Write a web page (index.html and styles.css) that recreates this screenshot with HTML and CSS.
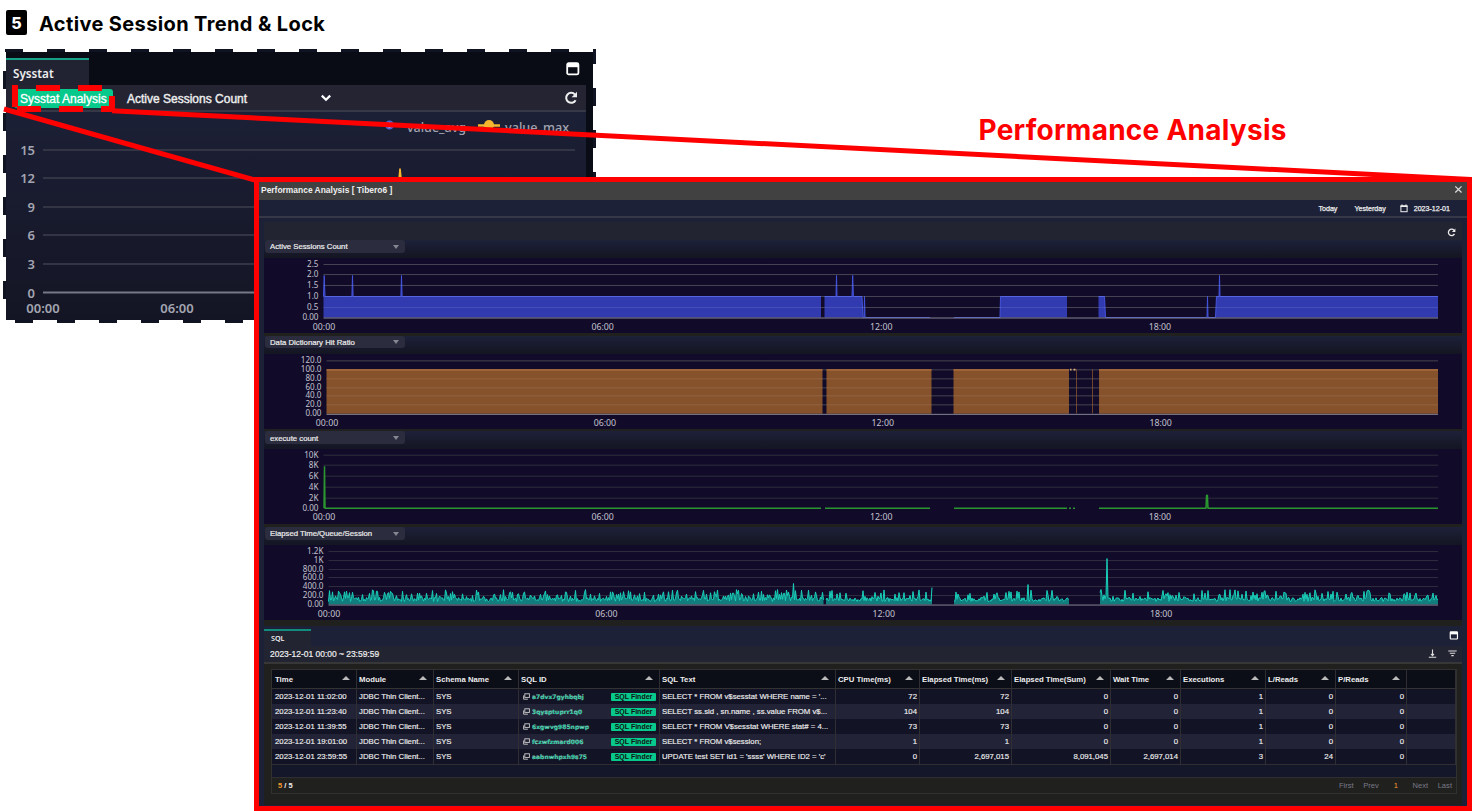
FILE: index.html
```
<!DOCTYPE html>
<html lang="en">
<head>
    <meta charset="UTF-8">
    <meta name="viewport" content="width=device-width, initial-scale=1.0">
    <title>Active Session Trend &amp; Lock</title>
    <link rel="stylesheet" href="styles.css">
</head>
<body>
    <header class="page-title">
        <span class="step">5</span>
        <h1>Active Session Trend &amp; Lock</h1>
    </header>

    <section class="sysstat">
        <div class="sysstat-panel">
            <div class="sysstat-tabs">
                <span class="sysstat-tab">Sysstat</span>
                <svg class="icon-max" width="14" height="14" viewBox="0 0 14 14"><rect x="1.2" y="1.2" width="11.2" height="11.2" rx="1.5"/><path d="M1 3.4h11.6"/></svg>
            </div>
            <div class="sysstat-toolbar">
                <span class="analysis-button">Sysstat Analysis</span>
                <span class="stat-name">Active Sessions Count</span>
                <svg class="icon-chevron" width="12" height="8" viewBox="0 0 12 8"><path d="M1.8 1.6l4.2 4.2 4.2-4.2"/></svg>
                <svg class="icon-refresh" width="14" height="14" viewBox="0 0 14 14"><path d="M11.6 9.2A5 5 0 1 1 11 3.6"/><path class="fill" d="M13 .8v5.4H7.6z"/></svg>
            </div>
            <svg class="sysstat-chart" width="580" height="208" viewBox="6 112 580 208">
                <g class="big-grid">
                    <path d="M43 150H575M43 178H575M43 207H575M43 235H575M43 264H575"/>
                    <path class="axis" d="M43 292.5H575"/>
                </g>
                <g class="big-labels" text-anchor="end">
                    <text x="35" y="155">15</text>
                    <text x="35" y="183">12</text>
                    <text x="35" y="212">9</text>
                    <text x="35" y="240">6</text>
                    <text x="35" y="269">3</text>
                    <text x="35" y="297.5">0</text>
                </g>
                <g class="big-labels" text-anchor="middle">
                    <text x="43" y="313">00:00</text>
                    <text x="177" y="313">06:00</text>
                </g>
                <circle cx="389.5" cy="125" r="3.5" fill="#fff" stroke="#4a63d8" stroke-width="2"/>
                <path d="M478 125.5h22" stroke="#f5b52e" stroke-width="2.5"/>
                <circle cx="489" cy="125" r="5" fill="#f5b52e"/>
                <g class="legend-labels">
                    <text x="407" y="131.5" textLength="59" lengthAdjust="spacingAndGlyphs">value_avg</text>
                    <text x="505" y="131.5" textLength="64" lengthAdjust="spacingAndGlyphs">value_max</text>
                </g>
                <path d="M398 182l1.2-13.5h1.6l1.4 13.5z" fill="#f5b52e"/>
            </svg>
        </div>
    </section>

    <h2 class="callout-title">Performance Analysis</h2>

    <svg class="callout-lines" width="1472" height="190" viewBox="0 0 1472 190">
        <path class="frame" d="M36 88H60M78 88H102M17 109H41M59 109H83M101 109H115M15 85V107M112 96V112"/>
        <path class="line" d="M4 109L258 181M112 110.7L1471 179.5"/>
    </svg>

    <main class="window">
        <div class="window-title">
            <span>Performance Analysis [ Tibero6 ]</span>
            <svg width="9" height="9" viewBox="0 0 9 9"><path d="M1.3 1.3l6.2 6.2M7.5 1.3L1.3 7.5"/></svg>
        </div>
        <div class="date-bar">
            <span>Today</span>
            <span>Yesterday</span>
            <svg width="8" height="9" viewBox="0 0 8 9"><rect x=".9" y="1.7" width="6.2" height="6"/><path d="M.5 2.5h7M2 .4v1.5M6 .4v1.5"/></svg>
            <span>2023-12-01</span>
        </div>
        <div class="content">
            <div class="refresh-row">
                <svg class="icon-refresh" width="9" height="9" viewBox="0 0 14 14"><path d="M11.6 9.2A5 5 0 1 1 11 3.6"/><path class="fill" d="M13 .8v5.4H7.6z"/></svg>
            </div>
            <div id="charts" class="charts"></div>

            <div class="sql-tabs">
                <span class="sql-tab">SQL</span>
                <svg class="icon-max" width="10" height="9" viewBox="0 0 14 14"><rect x="1.2" y="1.2" width="11.2" height="11.2" rx="1"/><path d="M1 3.4h11.6"/></svg>
            </div>
            <div class="sql-toolbar">
                <span class="range">2023-12-01 00:00 ~ 23:59:59</span>
                <svg width="9" height="9" viewBox="0 0 9 9"><path d="M.8 8.2h7.4M4.5.4v6M3 4.9l1.5 1.7L6 4.9"/></svg>
                <svg width="9" height="9" viewBox="0 0 9 9"><path d="M.3 2h8.4M1.8 4.3h5.4M3.3 6.6h2.4"/></svg>
            </div>
            <div class="sql-body">
                <div class="grid-box">
                    <table>
                        <colgroup>
                            <col class="c-time"><col class="c-module"><col class="c-schema"><col class="c-id"><col class="c-text"><col class="c-cpu"><col class="c-elms"><col class="c-elsum"><col class="c-wait"><col class="c-exec"><col class="c-lr"><col class="c-pr"><col>
                        </colgroup>
                        <thead><tr id="head"></tr></thead>
                        <tbody id="rows"></tbody>
                    </table>
                    <div class="grid-empty"></div>
                    <div class="grid-footer">
                        <span><b>5</b> / 5</span>
                        <nav>
                            <span>First</span><span>Prev</span><span class="current">1</span><span>Next</span><span>Last</span>
                        </nav>
                    </div>
                </div>
            </div>
        </div>
    </main>

    <script src="script.js"></script>
</body>
</html>
```

FILE: styles.css
```
* {
    box-sizing: border-box;
}

body {
    margin: 0;
    height: 811px;
    position: relative;
    overflow: hidden;
    background: #fff;
    font-family: "Liberation Sans", Arial, sans-serif;
}

svg {
    display: block;
    flex: none;
    fill: none;
}

.page-title {
    display: flex;
    align-items: center;
    gap: 11px;
    padding: 10px 0 0 6px;
    height: 36px;
    font-family: Inter, sans-serif;
}

.page-title h1 {
    margin: 0;
    font-size: 20px;
    font-weight: 700;
    letter-spacing: 0.37px;
    line-height: 26px;
    padding: 2px 0 0 1px;
    color: #000;
}

.step {
    width: 21px;
    height: 25px;
    border-radius: 2px;
    background: #000;
    color: #fff;
    font-size: 16px;
    font-weight: 800;
    line-height: 26px;
    text-align: center;
    margin-top: -1px;
}

/* back panel, dashed outline */
.sysstat {
    position: absolute;
    left: 3px;
    top: 49px;
    width: 593px;
    height: 274px;
    padding: 3px;
    background:
        repeating-linear-gradient(90deg, #101321 0 18px, transparent 18px 42px) 2px 0 / 588px 3px no-repeat,
        linear-gradient(#101321, #101321) 590px 0 / 3px 15px no-repeat,
        repeating-linear-gradient(90deg, #101321 0 18px, transparent 18px 42px) 12px 271px / 570px 3px no-repeat,
        repeating-linear-gradient(#101321 0 18px, transparent 18px 42px) 0 22px / 3px 240px no-repeat,
        repeating-linear-gradient(#101321 0 18px, transparent 18px 42px) 590px 39px / 3px 220px no-repeat;
}

.sysstat-panel {
    height: 268px;
    padding-right: 7px;
    background: #0a0c15;
}

.sysstat-tabs {
    display: flex;
    align-items: flex-end;
    justify-content: space-between;
    height: 33px;
    padding-right: 6px;
    font-family: "Noto Sans", sans-serif;
}

.sysstat-tab {
    width: 83px;
    height: 27px;
    padding-left: 7px;
    border-top: 2px solid #16a085;
    background: #222332;
    color: #eee;
    font-size: 11.7px;
    font-weight: 600;
    line-height: 27px;
}

.sysstat-tabs .icon-max {
    margin-bottom: 9px;
}

.icon-max {
    stroke: #fff;
    stroke-width: 1.8;
}

.icon-max path {
    stroke-width: 3.6;
}

.sysstat-toolbar {
    display: flex;
    align-items: center;
    height: 27px;
    padding: 1px 8px 0 8px;
    border-bottom: 2px solid #373847;
    background: #242433;
    font-size: 12px;
}

.analysis-button {
    width: 99px;
    height: 19px;
    margin-top: 1px;
    border-radius: 3px;
    background: #08c98c;
    color: #fff;
    line-height: 20px;
    padding-left: 6px;
    white-space: nowrap;
    -webkit-text-stroke: 0.3px #fff;
}

.stat-name {
    width: 193px;
    margin-left: 14px;
    padding-top: 1px;
    color: #eee;
    -webkit-text-stroke: 0.4px #eee;
}

.icon-chevron {
    stroke: #fff;
    stroke-width: 2.2;
}

.icon-refresh {
    margin-left: auto;
    stroke: #eee;
    stroke-width: 2;
}

.icon-refresh .fill {
    fill: #eee;
    stroke: none;
}

.sysstat-chart {
    background: linear-gradient(#1c2036, #141524);
}

.big-grid path {
    stroke: #333545;
    stroke-width: 2;
}

.big-grid .axis {
    stroke: #777986;
}

.big-labels,
.legend-labels {
    font-family: "Noto Sans", sans-serif;
    font-size: 13px;
    font-weight: 600;
    fill: #a3a5b1;
}

.legend-labels {
    font-weight: 500;
}

.callout-title {
    position: absolute;
    left: 978.5px;
    top: 112px;
    margin: 0;
    color: #f00;
    font-family: Inter, sans-serif;
    font-size: 28px;
    font-weight: 700;
    letter-spacing: 0.25px;
    line-height: 37px;
    white-space: nowrap;
}

.callout-lines {
    position: absolute;
    left: 0;
    top: 0;
}

.callout-lines path {
    stroke: #f00;
}

.callout-lines .frame {
    stroke-width: 6;
}

.callout-lines .line {
    stroke-width: 5;
}

/* front window */
.window {
    position: absolute;
    left: 254px;
    top: 177px;
    width: 1218px;
    height: 634px;
    border: 5px solid #f00;
    background: #1d2138;
    color: #eee;
    font-size: 7.75px;
}

.window-title {
    display: flex;
    align-items: center;
    justify-content: space-between;
    height: 18px;
    padding: 0 4px 3px 2px;
    background: #414141;
    font-weight: 700;
    font-size: 8.45px;
}

.window-title svg {
    stroke: #ddd;
    stroke-width: 1.2;
}

.date-bar {
    display: flex;
    align-items: center;
    justify-content: flex-end;
    height: 18px;
    padding: 1px 17px 0 0;
    border-bottom: 2px solid #363848;
    font-size: 7.1px;
    -webkit-text-stroke: 0.25px #eee;
}

.date-bar span + span {
    margin-left: 17px;
}

.date-bar svg {
    margin: 0 6px 0 14px;
    stroke: #eee;
    stroke-width: 1;
}

.content {
    height: 583px;
    margin: 4px 5px 0;
    background: #20201f;
}

.refresh-row {
    display: flex;
    height: 18px;
    padding: 6px 6px 0 0;
    background: #232432;
}

.chart-block {
    height: 95.65px;
    padding-bottom: 2.6px;
}

.chart-head {
    height: 18px;
    padding-left: 1px;
    background: linear-gradient(#1d2139, #141522);
}

.select {
    display: flex;
    align-items: center;
    justify-content: space-between;
    width: 140px;
    height: 12.6px;
    padding: 1px 6px 0 5px;
    border-radius: 3px;
    background: #2b2c3d;
    -webkit-text-stroke: 0.2px #eee;
}

.select i {
    border: 3px solid transparent;
    border-top: 4px solid #858692;
    border-bottom: 0;
}

.plot {
    background: #110b29;
}

.plot text {
    font-family: "Noto Sans", sans-serif;
    font-size: 8.1px;
    fill: #c2c1ce;
}

.plot .x-label {
    font-size: 8.8px;
}

.plot .gridline {
    stroke: #302e3e;
    stroke-width: 1;
}

.plot .over {
    stroke: #fff;
    stroke-opacity: 0.1;
    stroke-width: 1;
}

.plot .axis {
    stroke: #858493;
    stroke-width: 1;
}

.sql-tabs {
    display: flex;
    align-items: flex-end;
    justify-content: space-between;
    height: 20px;
    margin-top: 3.4px;
    padding-right: 3px;
    background: #1d2138;
}

.sql-tab {
    width: 47px;
    height: 17px;
    padding-left: 7px;
    border-top: 2px solid #138b7b;
    background: #232432;
    font-family: "Noto Sans", sans-serif;
    font-size: 7.2px;
    font-weight: 600;
    line-height: 15px;
}

.sql-tabs .icon-max {
    margin-bottom: 6px;
}

.sql-toolbar {
    display: flex;
    align-items: center;
    height: 18px;
    padding: 0 5px 0 6px;
    border-bottom: 2px solid #373738;
    background: #232432;
    font-size: 8.45px;
    -webkit-text-stroke: 0.2px #eee;
}

.sql-toolbar .range {
    margin-right: auto;
}

.sql-toolbar svg {
    margin-left: 11px;
    stroke: #ddd;
    stroke-width: 1.1;
}

.sql-body {
    padding: 5px 5px 0 7px;
}

.grid-box {
    border: 1px solid #313131;
}

table {
    width: 100%;
    border-collapse: separate;
    border-spacing: 0;
    table-layout: fixed;
}

.c-time { width: 85px; }
.c-module { width: 77px; }
.c-schema { width: 85px; }
.c-id { width: 141px; }
.c-text { width: 176px; }
.c-cpu { width: 84px; }
.c-elms { width: 92px; }
.c-elsum { width: 99px; }
.c-wait { width: 70px; }
.c-exec { width: 85px; }
.c-lr { width: 70px; }
.c-pr { width: 71px; }

th,
td {
    padding: 1px 3px 0 2px;
    border-right: 1px solid #2f2f33;
    overflow: hidden;
    white-space: nowrap;
    text-align: left;
    line-height: 13.9px;
}

th:first-child,
td:first-child {
    padding-left: 3px;
}

th {
    height: 19px;
    border-bottom: 1px solid #333;
    background: #0b0d17;
    font-size: 7.75px;
}

th div,
.sql-id {
    display: flex;
    align-items: center;
    justify-content: space-between;
}

th i {
    margin: -2px 3px 0 0;
    border: 4px solid transparent;
    border-bottom: 4px solid #bbb;
    border-top: 0;
}

td {
    height: 14.95px;
    font-size: 7.78px;
    -webkit-text-stroke: 0.15px #eee;
}

tbody tr {
    background: #121325;
}

tbody tr:nth-child(even) {
    background: #222336;
}

.num {
    text-align: right;
    padding-right: 2px;
}

.sql-id {
    height: 13.9px;
}

.sql-id svg {
    margin: 0 2px;
    stroke: #ccc;
    stroke-width: 0.9;
}

.sql-id a {
    margin-right: auto;
    color: #0fc99a;
    font-family: "DejaVu Sans", sans-serif;
    font-size: 6px;
    font-weight: 700;
}

.finder {
    width: 45px;
    height: 8px;
    border-radius: 1px;
    background: #08c98c;
    color: #111;
    font-size: 7px;
    font-weight: 700;
    line-height: 8.5px;
    text-align: center;
    -webkit-text-stroke: 0;
}

.grid-empty {
    height: 14px;
    border-top: 1px solid #2f2f33;
    border-bottom: 1px solid #2f2f33;
    background: #141629;
}

.grid-footer {
    display: flex;
    align-items: center;
    justify-content: space-between;
    height: 15px;
    padding: 1px 4px 0 6px;
    font-weight: 700;
    font-size: 7.5px;
}

.grid-footer nav {
    display: flex;
    color: #797a88;
    font-weight: 400;
    font-size: 7.6px;
}

.grid-footer nav span {
    margin-left: 9.5px;
}

.grid-footer nav .current {
    margin: 0 5px 0 15px;
}

.grid-footer b,
.grid-footer nav .current {
    color: #f39c2c;
}
```

FILE: script.js
```
const RIGHT = 1438;

// small fixed-seed generator so the trend line is stable
let seed = 11;
function rnd() {
    seed = (seed * 16807) % 2147483647;
    return seed / 2147483647;
}

function noise(x0, x1, rare) {
    const pts = [];
    for (let x = x0; x <= x1; x += 1) {
        let v = 3 + rnd() * 4;
        if (rnd() < rare) v = 7 + rnd() * 8;
        pts.push([x, v]);
    }
    return pts;
}

function spike(pts, x, v) {
    let best = pts[0];
    pts.forEach(p => { if (Math.abs(p[0] - x) < Math.abs(best[0] - x)) best = p; });
    best[1] = v;
    return pts;
}

const charts = [
    {
        name: 'Active Sessions Count', left: 323.5, base: 317.5, color: '#4354dd', fill: '#323ab0',
        ticks: [['2.5', 264.5], ['2.0', 274.5], ['1.5', 285.5], ['1.0', 296.5], ['0.5', 307.5], ['0.00', 317.5]],
        series: [
            [[323.5, 21], [324.2, 42], [325, 21], [351.9, 21], [352.5, 42], [353.1, 21], [400.9, 21], [401.5, 42], [402.1, 21], [821, 21]],
            [[824.5, 21], [836, 21], [836.5, 42], [837, 21], [852, 21], [852.7, 42], [853.4, 21], [862, 21], [863, 0], [864, 0], [864.5, 21], [865, 0], [930, 0]],
            [[954, 0], [1000, 0], [1000.5, 21], [1067, 21]],
            [[1098.5, 21], [1104.5, 21], [1105.5, 0], [1207, 0], [1207.5, 21], [1208, 0], [1215.5, 0], [1216.5, 21], [1219, 21], [1219.5, 42], [1220, 21], [RIGHT, 21]]
        ]
    },
    {
        name: 'Data Dictionary Hit Ratio', left: 326.5, base: 413.5, color: '#c77530', fill: '#85522b',
        ticks: [['120.0', 360.5], ['100.0', 369.5], ['80.0', 378.5], ['60.0', 387.5], ['40.0', 395.5], ['20.0', 404.5], ['0.00', 413.5]],
        series: [
            [[326.5, 44], [822.5, 44]], [[826.5, 44], [931.5, 44]], [[953.5, 44], [1069, 44]], [[1099, 44], [RIGHT, 44]]
        ],
        extra: '<path d="M1076.5 369V413M1092.5 369V413" stroke="#70422b"/><path d="M1070 369.3h1.5M1073.5 369.3h2" stroke="#ddaa72" stroke-width="1.6"/>'
    },
    {
        name: 'execute count', left: 323.5, base: 508.5, color: '#2b9630', fill: '#1c5b26', width: 1.5,
        ticks: [['10K', 455.5], ['8K', 465.5], ['6K', 476.5], ['4K', 487.5], ['2K', 498.5], ['0.00', 508.5]],
        series: [
            [[324, 0], [324.5, 42], [325, 0], [821, 0]], [[825, 0], [930, 0]], [[954, 0], [1067, 0]],
            [[1069, 0], [1071, 0]], [[1073, 0], [1075, 0]],
            [[1099, 0], [1206, 0], [1206.6, 13], [1207.4, 13], [1208, 0], [RIGHT, 0]]
        ]
    },
    {
        name: 'Elapsed Time/Queue/Session', left: 328.5, base: 604.5, color: '#19cfba', fill: '#117d7c',
        ticks: [['1.2K', 551.5], ['1K', 560.5], ['800.0', 569.5], ['600.0', 577.5], ['400.0', 586.5], ['200.0', 595.5], ['0.00', 604.5]],
        series: [
            spike(noise(328.5, 824, 0.32), 794, 21),
            noise(826, 892, 0.15).concat(spike(noise(893, 932, 0.2), 932, 17)),
            spike(noise(954, 1069, 0.22), 1028, 20),
            spike(noise(1100, RIGHT, 0.24), 1107, 46)
        ]
    }
];

document.getElementById('charts').innerHTML = charts.map((c, i) => {
    const top = Math.round((258 + i * 95.65) * 100) / 100;
    const lines = cls => c.ticks.slice(0, -1)
        .map(t => `<path class="${cls}" d="M${c.left} ${t[1]}H${RIGHT}"/>`).join('');
    const areas = c.series.map(s => {
        const line = s.map(p => `${p[0].toFixed(1)} ${(c.base - p[1]).toFixed(1)}`).join('L');
        return `<path fill="${c.fill}" d="M${s[0][0]} ${c.base}L${line}V${c.base}z"/>` +
            `<path stroke="${c.color}" stroke-width="${c.width || 1}" stroke-linejoin="bevel" d="M${line}"/>`;
    }).join('');
    const yLabels = c.ticks.map(t => `<text x="${c.left - 5}" y="${t[1] + 2.4}" text-anchor="end">${t[0]}</text>`).join('');
    const xLabels = ['00:00', '06:00', '12:00', '18:00'].map((t, k) =>
        `<text class="x-label" x="${c.left + 0.5 + k * (RIGHT - c.left) / 4}" y="${c.base + 12}" text-anchor="middle">${t}</text>`).join('');
    return `<div class="chart-block">
        <div class="chart-head"><div class="select">${c.name}<i></i></div></div>
        <svg class="plot" width="1198" height="75" viewBox="264 ${top} 1198 75">
            ${lines('gridline')}${areas}${c.extra || ''}${i < 2 ? lines('over') : ''}
            ${i === 2 ? '' : `<path class="axis" d="M${c.left} ${c.base + 0.5}H${RIGHT}"/>`}
            ${yLabels}${xLabels}
        </svg>
    </div>`;
}).join('');

const heads = ['Time', 'Module', 'Schema Name', 'SQL ID', 'SQL Text', 'CPU Time(ms)', 'Elapsed Time(ms)',
    'Elapsed Time(Sum)', 'Wait Time', 'Executions', 'L/Reads', 'P/Reads'];
document.getElementById('head').innerHTML = heads.map(h => `<th><div>${h}<i></i></div></th>`).join('') + '<th></th>';

const rows = [
    ['11:02:00', 'a7dvx7gyhbqbj', "SELECT * FROM v$sesstat WHERE name = '...", '72', '72', '0', '0', '1', '0', '0'],
    ['11:23:40', '3qysptuprr1q0', 'SELECT ss.sid , sn.name , ss.value FROM v$...', '104', '104', '0', '0', '1', '0', '0'],
    ['11:39:55', '6xgwvg985npwp', 'SELECT * FROM V$sesstat WHERE stat# = 4...', '73', '73', '0', '0', '1', '0', '0'],
    ['19:01:00', 'fczwfzmard006', 'SELECT * FROM v$session;', '1', '1', '0', '0', '1', '0', '0'],
    ['23:59:55', 'aabnwhpxh9s75', "UPDATE test SET id1 = 'ssss' WHERE ID2 = 'c'", '0', '2,697,015', '8,091,045', '2,697,014', '3', '24', '0']
];
const copyIcon = '<svg width="7" height="7" viewBox="0 0 7 7"><rect x="1.8" y=".8" width="4.6" height="3.6"/><path d="M.6 2.4v3.8h4.3"/></svg>';
document.getElementById('rows').innerHTML = rows.map(r => `<tr>
    <td>2023-12-01 ${r[0]}</td><td>JDBC Thin Client...</td><td>SYS</td>
    <td><div class="sql-id">${copyIcon}<a>${r[1]}</a><span class="finder">SQL Finder</span></div></td>
    <td>${r[2]}</td>${r.slice(3).map(n => `<td class="num">${n}</td>`).join('')}<td></td>
</tr>`).join('');
```
